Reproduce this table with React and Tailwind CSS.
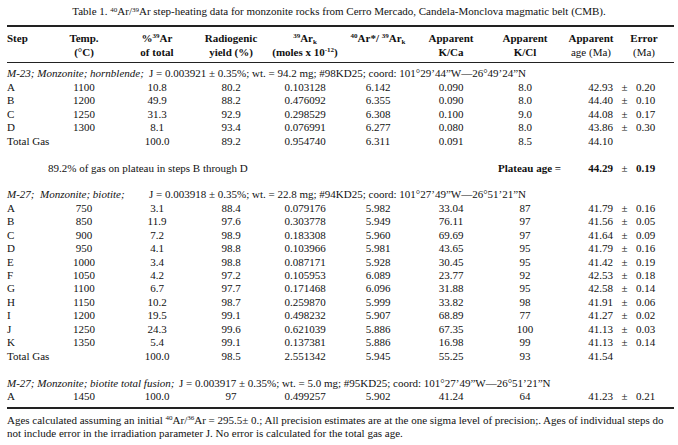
import React from 'react';

const m23 = [
  ['A', '1100', '10.8', '80.2', '0.103128', '6.142', '0.090', '8.0', '42.93', '0.20'],
  ['B', '1200', '49.9', '88.2', '0.476092', '6.355', '0.090', '8.0', '44.40', '0.10'],
  ['C', '1250', '31.3', '92.9', '0.298529', '6.308', '0.100', '9.0', '44.08', '0.17'],
  ['D', '1300', '8.1', '93.4', '0.076991', '6.277', '0.080', '8.0', '43.86', '0.30'],
  ['Total Gas', '', '100.0', '89.2', '0.954740', '6.311', '0.091', '8.5', '44.10', ''],
];

const m27 = [
  ['A', '750', '3.1', '88.4', '0.079176', '5.982', '33.04', '87', '41.79', '0.16'],
  ['B', '850', '11.9', '97.6', '0.303778', '5.949', '76.11', '97', '41.56', '0.05'],
  ['C', '900', '7.2', '98.9', '0.183308', '5.960', '69.69', '97', '41.64', '0.09'],
  ['D', '950', '4.1', '98.8', '0.103966', '5.981', '43.65', '95', '41.79', '0.16'],
  ['E', '1000', '3.4', '98.8', '0.087171', '5.928', '30.45', '95', '41.42', '0.19'],
  ['F', '1050', '4.2', '97.2', '0.105953', '6.089', '23.77', '92', '42.53', '0.18'],
  ['G', '1100', '6.7', '97.7', '0.171468', '6.096', '31.88', '95', '42.58', '0.14'],
  ['H', '1150', '10.2', '98.7', '0.259870', '5.999', '33.82', '98', '41.91', '0.06'],
  ['I', '1200', '19.5', '99.1', '0.498232', '5.907', '68.89', '77', '41.27', '0.02'],
  ['J', '1250', '24.3', '99.6', '0.621039', '5.886', '67.35', '100', '41.13', '0.03'],
  ['K', '1350', '5.4', '99.1', '0.137381', '5.886', '16.98', '99', '41.13', '0.14'],
  ['Total Gas', '', '100.0', '98.5', '2.551342', '5.945', '55.25', '93', '41.54', ''],
];

const fusion = [
  ['A', '1450', '100.0', '97', '0.499257', '5.902', '41.24', '64', '41.23', '0.21'],
];

function Row({ r }) {
  return (
    <div className="flex h-[13.45px] leading-[13.45px] whitespace-nowrap">
      <div className="w-[42px]">{r[0]}</div>
      <div className="w-[70px] text-center">{r[1]}</div>
      <div className="w-[76px] text-center">{r[2]}</div>
      <div className="w-[72px] text-center">{r[3]}</div>
      <div className="w-[76px] text-center">{r[4]}</div>
      <div className="w-[70px] text-center">{r[5]}</div>
      <div className="w-[76px] text-center">{r[6]}</div>
      <div className="w-[72px] text-center">{r[7]}</div>
      <div className="w-[52px] text-right">{r[8]}</div>
      <div className="w-[23px] text-center">{r[9] ? '±' : ''}</div>
      <div className="w-[31px]">{r[9]}</div>
    </div>
  );
}

function Info({ label, w, rest }) {
  return (
    <div className="h-[13.45px] leading-[13.45px] whitespace-pre">
      <span className={`inline-block italic ${w}`}>{label}</span>
      <span>{rest}</span>
    </div>
  );
}

const Blank = () => <div className="h-[13.45px]" />;

function Sup({ children }) {
  return <sup className="text-[7px]">{children}</sup>;
}

function Ark() {
  return (
    <>
      <Sup>39</Sup>Ar<sub className="text-[7px]">k</sub>
    </>
  );
}

export default function App() {
  return (
    <div className="w-[678px] h-[445px] overflow-hidden bg-white text-[#111] text-[11px] [font-family:'Liberation_Serif','Times_New_Roman',serif] pl-[7px] pr-[4px] pt-[5px]">
      {/* titre */}
      <div className="text-center leading-[13.45px] whitespace-nowrap -ml-[7px] -mr-[4px]">
        Table 1. <Sup>40</Sup>Ar/<Sup>39</Sup>Ar step-heating data for monzonite rocks from Cerro Mercado, Candela-Monclova magmatic belt (CMB).
      </div>
      <div className="h-[1.5px] bg-[#222] mt-[7px]" />

      {/* entête */}
      <div className="flex font-bold leading-[14px] pt-[4px] pb-[3px] whitespace-nowrap">
        <div className="w-[42px]">Step</div>
        <div className="w-[70px] text-center">Temp.<br />(°C)</div>
        <div className="w-[76px] text-center">%<Sup>39</Sup>Ar<br />of total</div>
        <div className="w-[72px] text-center">Radiogenic<br />yield (%)</div>
        <div className="w-[76px] text-center"><Ark /><br />(moles x 10<Sup>-12</Sup>)</div>
        <div className="w-[70px] text-center"><Sup>40</Sup>Ar*/ <Ark /></div>
        <div className="w-[76px] text-center">Apparent<br />K/Ca</div>
        <div className="w-[72px] text-center">Apparent<br />K/Cl</div>
        <div className="w-[60px] text-center">Apparent<br /><span className="font-normal">age (Ma)</span></div>
        <div className="w-[46px] text-center">Error<br /><span className="font-normal">(Ma)</span></div>
      </div>
      <div className="h-[1.5px] bg-[#222]" />

      <div className="pt-[4px] pb-[4px]">
        <Info
          label="M-23; Monzonite; hornblende;"
          w="w-[142px]"
          rest="J = 0.003921 ± 0.35%; wt. = 94.2 mg; #98KD25; coord: 101°29’44”W—26°49’24”N"
        />
        {m23.map((r, i) => <Row key={'a' + i} r={r} />)}
        <Blank />
        <div className="flex h-[13.45px] leading-[13.45px] whitespace-nowrap">
          <div className="w-[491px] pl-[41px]">89.2% of gas on plateau in steps B through D</div>
          <div className="w-[63px] font-bold">Plateau age =</div>
          <div className="w-[52px] text-right font-bold">44.29</div>
          <div className="w-[23px] text-center">±</div>
          <div className="w-[31px] font-bold">0.19</div>
        </div>
        <Blank />
        <Info
          label="M-27;  Monzonite; biotite;"
          w="w-[142px]"
          rest="J = 0.003918 ± 0.35%; wt. = 22.8 mg; #94KD25; coord: 101°27’49”W—26°51’21”N"
        />
        {m27.map((r, i) => <Row key={'b' + i} r={r} />)}
        <Blank />
        <Info
          label="M-27; Monzonite; biotite total fusion;"
          w="w-[172px]"
          rest="J = 0.003917 ± 0.35%; wt. = 5.0 mg; #95KD25; coord: 101°27’49”W—26°51’21”N"
        />
        {fusion.map((r, i) => <Row key={'c' + i} r={r} />)}
      </div>
      <div className="h-[1.5px] bg-[#222]" />

      {/* note */}
      <div className="pt-[5px] leading-[13px] whitespace-nowrap">
        Ages calculated assuming an initial <Sup>40</Sup>Ar/<Sup>36</Sup>Ar = 295.5± 0.; All precision estimates are at the one sigma level of precision;. Ages of individual steps do
        <br />
        not include error in the irradiation parameter J. No error is calculated for the total gas age.
      </div>
    </div>
  );
}
